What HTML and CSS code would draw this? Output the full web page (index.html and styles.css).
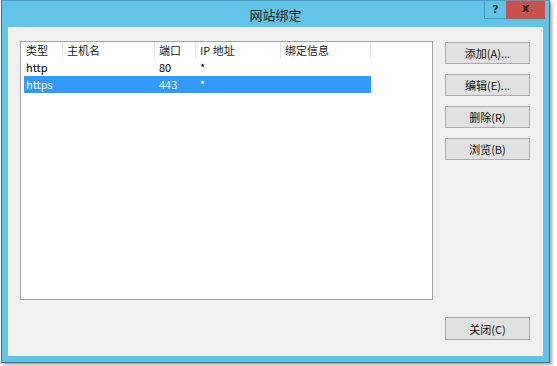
FILE: index.html
```html
<!DOCTYPE html>
<html lang="zh-CN">
<head>
<meta charset="utf-8">
<title>网站绑定</title>
<link rel="stylesheet" href="styles.css">
</head>
<body>
<div class="window">
  <div class="titlebar">
    <div class="spacer"></div>
    <div class="title">网站绑定</div>
    <div class="controls">
      <div class="btn-help">?</div>
      <div class="btn-close">x</div>
    </div>
  </div>
  <div class="client">
    <div class="main">
      <div class="list">
        <div class="header">
          <div class="hcell h1">类型</div>
          <div class="hcell h2">主机名</div>
          <div class="hcell h3">端口</div>
          <div class="hcell h4">IP 地址</div>
          <div class="hcell h5">绑定信息</div>
          <div class="hcell hfill"></div>
        </div>
        <div class="item">
          <div class="cell first">http</div>
          <div class="cell"></div>
          <div class="cell">80</div>
          <div class="cell">*</div>
          <div class="cell"></div>
        </div>
        <div class="item selected">
          <div class="cell first">https</div>
          <div class="cell"></div>
          <div class="cell">443</div>
          <div class="cell">*</div>
          <div class="cell"></div>
        </div>
      </div>
      <div class="actions">
        <button class="btn">添加(A)...</button>
        <button class="btn">编辑(E)...</button>
        <button class="btn">删除(R)</button>
        <button class="btn">浏览(B)</button>
      </div>
    </div>
    <div class="footer">
      <button class="btn btn-close-dialog">关闭(C)</button>
    </div>
  </div>
</div>
</body>
</html>
```

FILE: styles.css
```css
html, body {
  margin: 0;
  padding: 0;
  background: #ffffff;
}

body {
  width: 557px;
  height: 366px;
  overflow: hidden;
  font-family: "Noto Sans CJK SC", "Noto Sans", sans-serif;
  font-size: 11px;
  color: #000;
}

.window {
  margin-left: 1px;
  width: 547px;
  border: 1px solid #3b6f8a;
  border-top-color: #4f9cc4;
  background: #62c3e8;
  display: flex;
  flex-direction: column;
  box-shadow: 2px 2px 3px rgba(0, 0, 0, 0.35);
}

.titlebar {
  height: 26px;
  display: grid;
  grid-template-columns: 1fr auto 1fr;
  align-items: start;
}

.title {
  align-self: center;
  font-size: 13px;
  line-height: 16px;
  color: #1a1a1a;
  padding-top: 1px;
}

.controls {
  justify-self: end;
  display: flex;
  margin-right: 4px;
}

.btn-help {
  width: 22px;
  height: 18px;
  box-sizing: border-box;
  border: 1px solid rgba(40, 90, 120, 0.4);
  border-top: none;
  border-right: none;
  font-family: "DejaVu Sans", sans-serif;
  font-weight: bold;
  font-size: 11px;
  line-height: 17px;
  text-align: center;
  color: #1d2f3a;
}

.btn-close {
  width: 39px;
  height: 18px;
  background: #c9524f;
  font-family: "DejaVu Sans", sans-serif;
  font-weight: bold;
  font-size: 12px;
  line-height: 15px;
  text-align: center;
  color: #1a1a1a;
}

.client {
  margin: 0 6px 6px 6px;
  height: 329px;
  background: #f0f0f0;
  box-shadow: inset 0 0 0 1px #fafafa;
  padding: 14px 13px 0 12px;
  box-sizing: border-box;
  display: flex;
  flex-direction: column;
}

.main {
  display: flex;
  gap: 12px;
}

.list {
  width: 413px;
  height: 259px;
  box-sizing: border-box;
  border: 1px solid #a3a3a3;
  background: #fff;
}

.header {
  display: grid;
  grid-template-columns: 42px 92px 41px 85px 90px 1fr;
  height: 17px;
}

.hcell {
  border-right: 1px solid #e3e3e3;
  padding-left: 4px;
  line-height: 17px;
  white-space: nowrap;
  color: #1a1a1a;
}

.h1 {
  padding-left: 5px;
}

.hfill {
  border-right: none;
}

.item {
  display: grid;
  grid-template-columns: 39px 92px 41px 85px 90px;
  width: max-content;
  margin-left: 3px;
  height: 17px;
}

.cell {
  padding-left: 4px;
  line-height: 17px;
  white-space: nowrap;
}

.cell.first {
  padding-left: 2px;
}

.item.selected {
  background: #3399ff;
  color: #fff;
}

.actions {
  margin-top: 1px;
  display: flex;
  flex-direction: column;
  gap: 10px;
}

.btn {
  width: 85px;
  height: 22px;
  box-sizing: border-box;
  border: 1px solid #adadad;
  background: #e1e1e1;
  font-family: "Noto Sans CJK SC", "Noto Sans", sans-serif;
  font-size: 11px;
  line-height: 18px;
  color: #111;
  padding: 0;
  margin: 0;
  text-align: center;
}

.footer {
  display: flex;
  justify-content: flex-end;
  margin-top: 17px;
}

.btn-close-dialog {
  height: 23px;
}
```
